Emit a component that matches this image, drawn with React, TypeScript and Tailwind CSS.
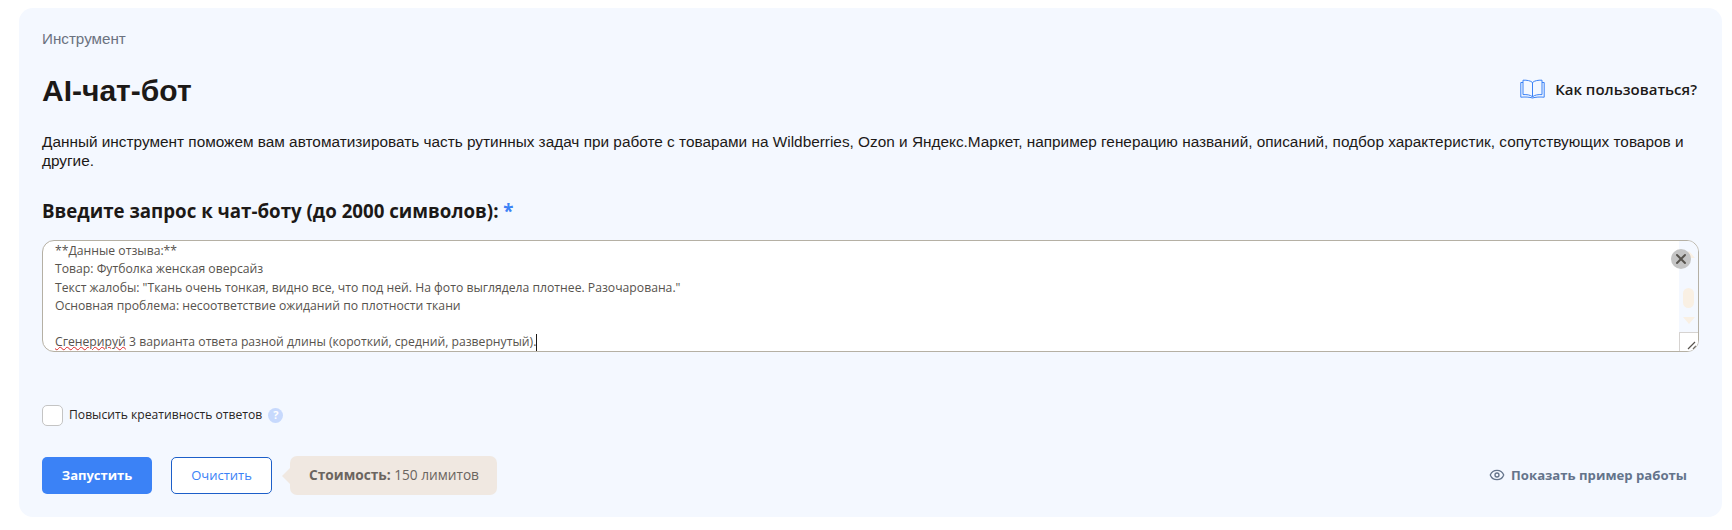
import { Eye, X } from 'lucide-react';

const sans = "font-['Liberation_Sans',Arial,sans-serif]";
const open = "font-['Open_Sans',sans-serif]";

function BookIcon() {
  return (
    <svg width="25" height="20" viewBox="0 0 25 20" fill="none" stroke="#3b82f6" strokeWidth="1">
      <path d="M12.5 3.5C10.5 1.7 7 1 3 1.2V15.6C7 15.4 10.5 16 12.5 17.8C14.5 16 18 15.4 22 15.6V1.2C18 1 14.5 1.7 12.5 3.5Z" />
      <path d="M12.5 3.5V17.8" />
      <path d="M3 3.5H.8V18.2C5 17.8 9.5 18 12.5 19C15.5 18 20 17.8 24.2 18.2V3.5H22" />
    </svg>
  );
}

function Prompt() {
  return (
    <div className={`h-[110px] overflow-hidden pl-3 pt-px text-[12.2px] leading-[18.3px] text-[#57534e] ${open}`}>
      <div>**Данные отзыва:**</div>
      <div>Товар: Футболка женская оверсайз</div>
      <div>Текст жалобы: "Ткань очень тонкая, видно все, что под ней. На фото выглядела плотнее. Разочарована."</div>
      <div>Основная проблема: несоответствие ожиданий по плотности ткани</div>
      <div className="h-[18.3px]" />
      <div className="flex items-center">
        <span className="underline decoration-wavy decoration-[#dc2626] decoration-1 underline-offset-0">Сгенерируй</span>
        <span className="whitespace-pre"> 3 варианта ответа разной длины (короткий, средний, развернутый).</span>
        <span className="h-[17px] w-px bg-[#1c1917]" />
      </div>
    </div>
  );
}

export default function App() {
  return (
    <div className="h-[530px] bg-white pl-[19px] pr-[10px] pt-[8px]">
      <div className="h-[509px] rounded-[14px] bg-[#f4f8ff] pl-[23px] pr-[24px] pt-[21px]">
        <div className={`text-[15.2px] leading-[20px] text-[#6b7280] ${sans}`}>Инструмент</div>

        <div className="mt-[22px] flex items-center justify-between">
          <h1 className={`text-[30px] font-bold leading-[40px] text-[#1c1917] ${sans}`}>AI-чат-бот</h1>
          <div className="mb-[4px] mr-px flex items-center gap-[10px]">
            <BookIcon />
            <span className={`text-[15px] font-semibold text-[#1c1917] ${open}`}>Как пользоваться?</span>
          </div>
        </div>

        <p className={`mt-[21px] text-[15.36px] leading-[19px] text-[#1c1917] ${sans}`}>
          Данный инструмент поможем вам автоматизировать часть рутинных задач при работе с товарами на Wildberries, Ozon и Яндекс.Маркет, например генерацию названий, описаний, подбор характеристик, сопутствующих товаров и другие.
        </p>

        <div className={`mt-[27px] text-[18.7px] font-bold leading-[28px] text-[#1c1917] ${open}`}>
          Введите запрос к чат-боту (до 2000 символов): <span className="text-[#3b82f6]">*</span>
        </div>

        <div className="relative mt-[15px] mr-[-1px] overflow-hidden rounded-[12px] border border-[#b5b0a4] bg-white">
          <Prompt />
          {/* scrollbar */}
          <div className="absolute inset-y-0 right-0 flex w-[19px] flex-col items-center bg-[#f4f8ff]">
            <div className="mt-[10px] h-0 w-0 border-x-[6px] border-b-[7px] border-x-transparent border-b-[#f9f0e4]" />
            <div className="mt-[30px] h-[21px] w-[11px] rounded-full bg-[#f9f0e4]" />
            <div className="mt-[9px] h-0 w-0 border-x-[6px] border-t-[7px] border-x-transparent border-t-[#f9f0e4]" />
            <div className="relative mt-[8px] h-[19px] w-full border-l border-t border-[#d6d3d1] bg-white">
              <svg className="absolute bottom-0 right-0" width="12" height="12" viewBox="0 0 12 12" stroke="#57534e" strokeWidth="1.2">
                <path d="M2 10 9 3M7 10 10 7" />
              </svg>
            </div>
          </div>
          <div className="absolute right-[7px] top-[8px] flex h-5 w-5 items-center justify-center rounded-full bg-[#c4c4c4]">
            <X size={16} strokeWidth={2.8} className="text-[#57534e]" />
          </div>
        </div>

        <div className="mt-[53px] flex items-center">
          <div className="h-[21px] w-[21px] rounded-[5px] border border-[#c4c4c4] bg-white" />
          <span className={`ml-[6px] text-[12.15px] text-[#292524] ${open}`}>Повысить креативность ответов</span>
          <span className={`ml-[6px] flex h-[15px] w-[15px] items-center justify-center rounded-full bg-[#c7d9fd] text-[11px] font-bold text-white ${open}`}>?</span>
        </div>

        <div className="mt-[30px] flex items-center">
          <button className={`h-[37px] w-[110px] rounded-[5px] bg-[#3b82f6] text-[13px] font-bold text-white ${open}`}>Запустить</button>
          <button className={`ml-[19px] h-[37px] w-[101px] rounded-[5px] border border-[#1d5fc9] bg-white text-[13px] text-[#3b82f6] ${open}`}>Очистить</button>
          <div className="relative ml-[18px] flex h-[39px] w-[207px] items-center rounded-[7px] bg-[#f0e8e1] pl-[19px]">
            <div className="absolute left-[-8px] top-[12px] h-0 w-0 border-y-[8px] border-r-[8px] border-y-transparent border-r-[#f0e8e1]" />
            <span className={`text-[13.7px] text-[#6b6560] ${open}`}>
              <span className="font-bold">Стоимость:</span> 150 лимитов
            </span>
          </div>
          <div className="ml-auto mr-[11px] flex items-center gap-[6px]">
            <Eye size={16} className="text-[#64748b]" />
            <span className={`text-[13.15px] font-bold text-[#64748b] ${open}`}>Показать пример работы</span>
          </div>
        </div>
      </div>
    </div>
  );
}
